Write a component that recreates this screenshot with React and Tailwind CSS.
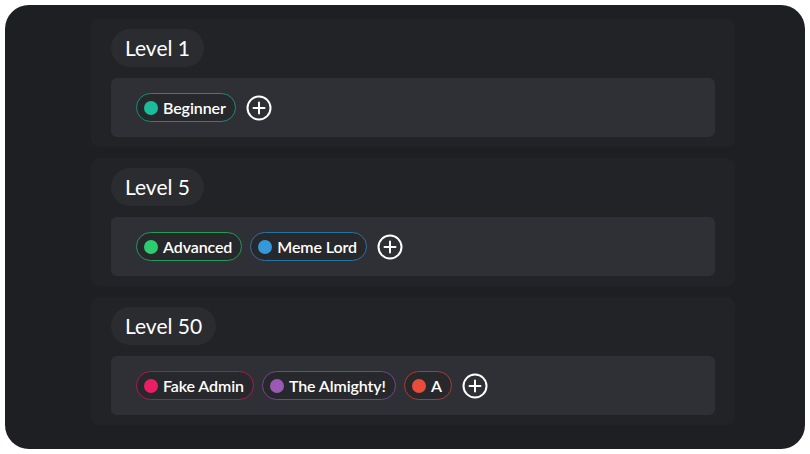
import React from "react";

const levels = [
  { name: "Level 1", roles: [{ n: "Beginner", c: "#1abc9c", b: "#168f77" }] },
  {
    name: "Level 5",
    roles: [
      { n: "Advanced", c: "#2ecc71", b: "#239a56" },
      { n: "Meme Lord", c: "#3498db", b: "#2873a6" },
    ],
  },
  {
    name: "Level 50",
    roles: [
      { n: "Fake Admin", c: "#e91e63", b: "#ad1a4d" },
      { n: "The Almighty!", c: "#9b59b6", b: "#76468a" },
      { n: "A", c: "#e74c3c", b: "#ad3b31" },
    ],
  },
];

function Plus() {
  return (
    <svg width="26" height="26" viewBox="0 0 26 26" className="ml-[2px]">
      <circle cx="13" cy="13" r="11.5" fill="none" stroke="#fff" strokeWidth="2" />
      <path d="M13 7.5v11M7.5 13h11" stroke="#fff" strokeWidth="2" strokeLinecap="round" />
    </svg>
  );
}

export default function App() {
  return (
    <div className="w-[810px] h-[454px] bg-white p-[5px]" style={{ fontFamily: 'Lato, sans-serif' }}>
      <div className="w-full h-full bg-[#1d1f22] rounded-[24px] pl-[86px] pr-[70px] pt-[14px] flex flex-col gap-[11px]">
        {levels.map((lv) => (
          <div key={lv.name} className="bg-[#222326] rounded-[8px] px-[20px] pt-[10px] pb-[10px] h-[128px] flex flex-col gap-[11px]">
            <div className="self-start h-[38px] px-[14px] rounded-full bg-[#2b2c30] text-white text-[21px] flex items-center">
              {lv.name}
            </div>
            <div className="h-[59px] bg-[#2f3035] rounded-[6px] pl-[25px] flex items-center gap-[8px]">
              {lv.roles.map((r) => (
                <div
                  key={r.n}
                  className="h-[29px] rounded-full border bg-[#27282c] pl-[7px] pr-[9px] flex items-center gap-[5px] text-white text-[16px] tracking-[-0.1px]"
                  style={{ borderColor: r.b }}
                >
                  <span className="w-[14px] h-[14px] rounded-full" style={{ backgroundColor: r.c }} />
                  <span className="font-semibold">{r.n}</span>
                </div>
              ))}
              <Plus />
            </div>
          </div>
        ))}
      </div>
    </div>
  );
}
